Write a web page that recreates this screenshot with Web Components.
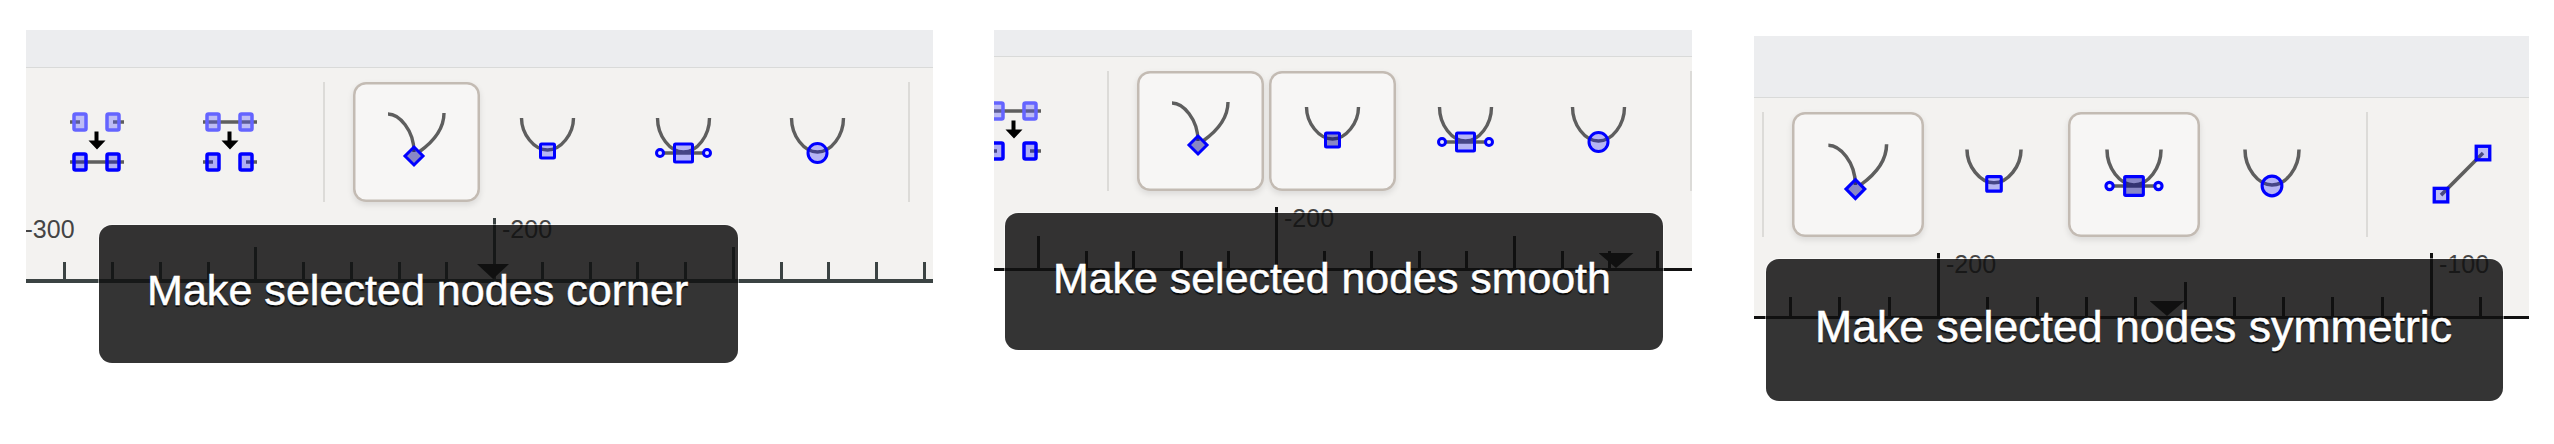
<!doctype html>
<html>
<head>
<meta charset="utf-8">
<title>Node tools</title>
<style>
  body {
    margin: 0;
    background: #fff;
    display: flex;
    align-items: flex-start;
    font-family: "Liberation Sans", Arial, sans-serif;
  }
</style>
</head>
<body>

<shot-panel style="--head:37px;--btn-w:127px;--btn-h:120px;--foot:82px;width:907px;margin:30px 0 0 26px">
  <tool-btn style="margin-left:7px"><node-icon type="join"></node-icon></tool-btn>
  <tool-btn style="margin-left:6px"><node-icon type="split"></node-icon></tool-btn>
  <tool-sep style="margin-left:30px"></tool-sep>
  <tool-btn style="margin-left:28px" active><node-icon type="corner"></node-icon></tool-btn>
  <tool-btn style="margin-left:4px"><node-icon type="smooth"></node-icon></tool-btn>
  <tool-btn style="margin-left:9px"><node-icon type="cusp"></node-icon></tool-btn>
  <tool-btn style="margin-left:7px"><node-icon type="auto"></node-icon></tool-btn>
  <tool-sep style="margin-left:27px"></tool-sep>
  <ruler-bar slot="ruler" origin="468" step="47.75" labels="-10,0" pointer="467" pointer-w="32" line="4" color="#3b4343" style="--h:71px"></ruler-bar>
  <tip-box slot="tip" style="--x:73px;--y:195px;--w:639px;--h:138px;--size:43.1px;--pad-x:48px;--pad-y:43.5px">Make selected nodes corner</tip-box>
</shot-panel>

<shot-panel style="--head:26px;--btn-w:127px;--btn-h:120px;--foot:80px;width:698px;margin:30px 0 0 61px">
  <tool-btn style="margin-left:-44px"><node-icon type="split"></node-icon></tool-btn>
  <tool-sep style="margin-left:30px"></tool-sep>
  <tool-btn style="margin-left:28px" active><node-icon type="corner"></node-icon></tool-btn>
  <tool-btn style="margin-left:5px" active><node-icon type="smooth"></node-icon></tool-btn>
  <tool-btn style="margin-left:6px"><node-icon type="cusp"></node-icon></tool-btn>
  <tool-btn style="margin-left:6px"><node-icon type="auto"></node-icon></tool-btn>
  <tool-sep style="margin-left:28px;width:3px"></tool-sep>
  <ruler-bar slot="ruler" origin="282" step="47.6" labels="0" pointer="622" pointer-w="35" line="3" color="#111" style="--h:70px"></ruler-bar>
  <tip-box slot="tip" style="--x:11px;--y:183px;--w:658px;--h:137px;--size:42.9px;--pad-x:48px;--pad-y:43.5px">Make selected nodes smooth</tip-box>
</shot-panel>

<shot-panel style="--head:61px;--btn-w:132px;--btn-h:125px;--foot:84px;width:775px;margin:36px 0 0 62px">
  <tool-sep style="margin-left:8px"></tool-sep>
  <tool-btn style="margin-left:28px" active><node-icon type="corner"></node-icon></tool-btn>
  <tool-btn style="margin-left:4px"><node-icon type="smooth"></node-icon></tool-btn>
  <tool-btn style="margin-left:8px" active><node-icon type="cusp"></node-icon></tool-btn>
  <tool-btn style="margin-left:6px"><node-icon type="auto"></node-icon></tool-btn>
  <tool-sep style="margin-left:28px"></tool-sep>
  <tool-btn style="margin-left:28px"><node-icon type="line"></node-icon></tool-btn>
  <ruler-bar slot="ruler" origin="184" step="49.3" labels="0,10" pointer="413" pointer-w="35" line="3" color="#111" style="--h:72px"></ruler-bar>
  <tip-box slot="tip" style="--x:12px;--y:223px;--w:737px;--h:142px;--size:44.6px;--pad-x:49px;--pad-y:46px">Make selected nodes symmetric</tip-box>
</shot-panel>

<script>
customElements.define('shot-panel', class extends HTMLElement {
  constructor () {
    super()
    let shadow = this.attachShadow({mode: 'open'})
    shadow.innerHTML = `
<style>
  :host {
    display: block;
    position: relative;
    flex: none;
    overflow: hidden;
    background: #fff;
    padding-bottom: var(--foot);
  }
  header {
    height: var(--head);
    background: #ecedef;
    border-bottom: 1px solid #d9dad9;
  }
  .tools {
    display: flex;
    align-items: stretch;
    padding: 14px 0 10px;
    background: #f3f2f0;
  }
</style>
<header></header>
<div class="tools"><slot></slot></div>
<slot name="ruler"></slot>
<slot name="tip"></slot>
`
  }
})

customElements.define('tool-btn', class extends HTMLElement {
  constructor () {
    super()
    let shadow = this.attachShadow({mode: 'open'})
    shadow.innerHTML = `
<style>
  :host {
    display: block;
    flex: none;
    width: var(--btn-w);
    height: var(--btn-h);
    border-radius: 13px;
  }
  :host([active]) {
    --node-fill: rgba(0, 0, 140, .45);
    background: #f7f6f5;
    box-shadow: inset 0 0 0 2.500px #c3bbb3, 0 3px 6px rgba(0, 0, 0, .1);
  }
</style>
<slot></slot>
`
  }
})

customElements.define('tool-sep', class extends HTMLElement {
  constructor () {
    super()
    let shadow = this.attachShadow({mode: 'open'})
    shadow.innerHTML = `
<style>
  :host {
    display: block;
    flex: none;
    width: 2px;
    background: #dcdbd8;
  }
</style>
`
  }
})

// drawings are in button units (127 x 120), the svg scales them to the button
const GREY = 'stroke="#5e5e5e" stroke-width="3.400" fill="none"'
const LIGHT = 'stroke="#6464ff" stroke-width="3.500" fill="rgba(90,90,255,.35)"'
const DARK = 'stroke="#0000ff" stroke-width="3.500" fill="rgba(0,0,255,.28)"'
const NODE = 'stroke="#0000ff" stroke-width="3" style="fill:var(--node-fill, rgba(0,0,255,.25))"'

const squares = (y, look) => `
  <rect x="41" y="${y - 8}" width="12" height="16" rx="1.5" ${look}/>
  <rect x="74" y="${y - 8}" width="12" height="16" rx="1.5" ${look}/>`
const joined = y => `<path d="M37 ${y}H91" ${GREY}/>`
const apart = y => `<path d="M37 ${y}H47M80 ${y}H91" ${GREY}/>`
const arrow = '<path d="M61.500 49.500h4v9h7l-8.500 9l-8.500 -9h6z" fill="#000"/>'
const curve = y => `<path d="M37.500 36C37.500 ${y - 16} 50 ${y} 63.500 ${y}C77 ${y} 89.500 ${y - 16} 89.500 36" ${GREY}/>`

const ICONS = {
  join: apart(40) + squares(40, LIGHT) + arrow + joined(80) + squares(80, DARK),
  split: joined(40) + squares(40, LIGHT) + arrow + apart(80) + squares(80, DARK),
  corner: `<path d="M35 32C46 32 61 48 61 70M91 31C91 48 80 60 66 70" ${GREY}/>
    <path d="M61 65L70 74L61 83L52 74Z" ${NODE}/>`,
  smooth: curve(68) + `<rect x="56.500" y="62" width="14" height="14" rx="1" ${NODE}/>`,
  cusp: curve(70) + `<path d="M40 71H87" ${GREY}/>
    <circle cx="40" cy="71" r="3.500" stroke="#0000ff" stroke-width="3" fill="#e4e4ff"/>
    <circle cx="87" cy="71" r="3.500" stroke="#0000ff" stroke-width="3" fill="#e4e4ff"/>
    <rect x="54.500" y="62" width="18" height="18" rx="1" ${NODE}/>`,
  auto: curve(70) + `<circle cx="63.500" cy="71" r="9.500" ${NODE}/>`,
  line: `<path d="M43.300 79.800L83.700 39.400" ${GREY}/>
    <rect x="36.800" y="73.300" width="13" height="13" fill="rgba(0,0,255,.22)" stroke="#0000ff" stroke-width="3.200"/>
    <rect x="77.200" y="32.900" width="13" height="13" fill="rgba(0,0,255,.22)" stroke="#0000ff" stroke-width="3.200"/>`
}

customElements.define('node-icon', class extends HTMLElement {
  constructor () {
    super()
    let shadow = this.attachShadow({mode: 'open'})
    shadow.innerHTML = `
<style>
  :host { display: block; width: 100%; height: 100%; }
  svg { display: block; width: 100%; height: 100%; filter: blur(.35px); }
</style>
<svg viewBox="0 0 127 120" preserveAspectRatio="none">${ICONS[this.getAttribute('type')]}</svg>
`
  }
})

customElements.define('ruler-bar', class extends HTMLElement {
  constructor () {
    super()
    let shadow = this.attachShadow({mode: 'open'})
    let origin = +this.getAttribute('origin')
    let step = +this.getAttribute('step')
    let color = this.getAttribute('color')
    let labels = this.getAttribute('labels').split(',').map(Number)
    let marks = ''
    for (let i = -10; i <= 12; i++) {
      let x = origin + i * step
      let kind = i % 10 === 0 ? 'major' : i % 5 === 0 ? 'mid' : 'short'
      marks += `<i class="${kind}" style="left:${x}px"></i>`
      if (labels.includes(i)) {
        marks += `<span style="left:${x + 8}px">${-200 + i * 10}</span>`
      }
    }
    let pw = +this.getAttribute('pointer-w')
    let px = +this.getAttribute('pointer') - pw / 2
    shadow.innerHTML = `
<style>
  :host {
    display: block;
    position: relative;
    overflow: hidden;
    height: var(--h);
    background: #f3f2f0;
    border-bottom: ${this.getAttribute('line')}px solid ${color};
    box-sizing: border-box;
  }
  i {
    position: absolute;
    bottom: 0;
    width: 3px;
    margin-left: -1px;
    background: ${color};
  }
  .major { top: 6px; }
  .mid { top: 35px; }
  .short { top: 50px; }
  span {
    position: absolute;
    top: 5px;
    font: 25px/1 "Liberation Sans", Arial, sans-serif;
    color: #444;
  }
  b {
    position: absolute;
    bottom: 0;
    width: ${pw}px;
    height: 15px;
    left: ${px}px;
    background: #111;
    clip-path: polygon(0 0, 100% 0, 50% 100%);
  }
</style>
${marks}
<b></b>
`
  }
})

customElements.define('tip-box', class extends HTMLElement {
  constructor () {
    super()
    let shadow = this.attachShadow({mode: 'open'})
    shadow.innerHTML = `
<style>
  :host {
    display: block;
    position: absolute;
    left: var(--x);
    top: var(--y);
    width: var(--w);
    height: var(--h);
    box-sizing: border-box;
    padding: var(--pad-y) 0 0 var(--pad-x);
    border-radius: 13px;
    background: rgba(17, 17, 17, .85);
    box-shadow: 0 0 0 1px rgba(255, 255, 255, .5);
    color: #fff;
    font: var(--size)/1 "Liberation Sans", Arial, sans-serif;
    -webkit-text-stroke: .5px #fff;
    text-shadow: 0 2px 1px rgba(0, 0, 0, .85);
    white-space: nowrap;
  }
</style>
<slot></slot>
`
  }
})
</script>
</body>
</html>
